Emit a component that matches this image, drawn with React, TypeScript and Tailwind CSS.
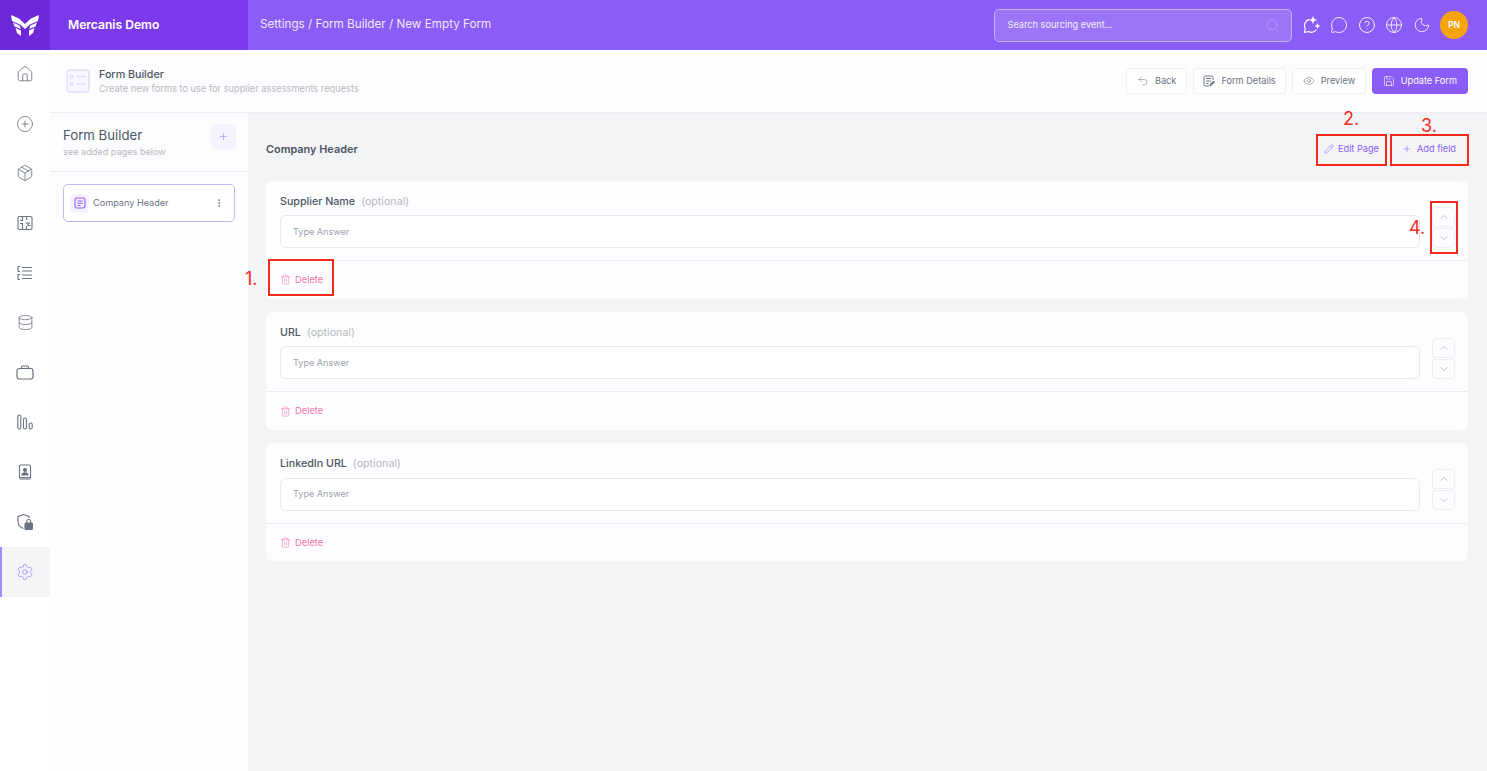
import {
  ChevronDown,
  ChevronUp,
  CircleHelp,
  CirclePlus,
  Database,
  Eye,
  Globe,
  House,
  MessageCircle,
  Moon,
  Package,
  Pencil,
  Plus,
  Save,
  Search,
  Settings,
  Trash2,
  Undo2,
  EllipsisVertical,
} from 'lucide-react'

const fields = ['Supplier Name', 'URL', 'LinkedIn URL']

function Logo() {
  return (
    <svg width="28" height="21" viewBox="0 0 28 21" fill="#fff">
      <path d="M0 0L8 3.500L14 9L20 3.500L28 0L27 6L19 9.500L14 14L9 9.500L1 6Z" />
      <path d="M2 7.500L8.500 10.500L10 14L3.500 11.500Z" />
      <path d="M26 7.500L19.500 10.500L18 14L24.500 11.500Z" />
      <path d="M4.500 13L10 15.500V21L6 18Z" />
      <path d="M23.500 13L18 15.500V21L22 18Z" />
    </svg>
  )
}

function MazeIcon() {
  return (
    <svg width="16" height="16" viewBox="0 0 16 16" fill="none" stroke="#6b7280" strokeWidth="1.100">
      <rect x="1" y="1.500" width="14" height="13" rx="1.500" />
      <path d="M5.500 1.500V5.500H3M3 8.500H5.500V14.500M9.500 1.500V5M8.500 8H13M11 8V10.500H13.500M9.500 11V14.500" />
    </svg>
  )
}

function ListIcon() {
  return (
    <svg width="16" height="16" viewBox="0 0 16 16" fill="none" stroke="#6b7280" strokeWidth="1.100">
      <path d="M3 1.500H1V6.500H3M3 9.500H1V14.500H3M5 2.500H15M5 6H15M5 10H15M5 13.500H15" />
    </svg>
  )
}

function BarsIcon() {
  return (
    <svg width="16" height="16" viewBox="0 0 16 16" fill="none" stroke="#6b7280" strokeWidth="1.100">
      <rect x="0.800" y="1" width="3" height="14" rx="1.500" />
      <rect x="6.500" y="4" width="3" height="11" rx="1.500" />
      <rect x="12.200" y="9" width="3" height="6" rx="1.500" />
    </svg>
  )
}

function BriefcaseIcon() {
  return (
    <svg width="18" height="18" viewBox="0 0 18 18" fill="none" stroke="#6b7280" strokeWidth="1.200">
      <rect x="1" y="4.500" width="16" height="10.500" rx="2.500" />
      <path d="M5.500 4.500V3.500A1.500 1.500 0 0 1 7 2H11A1.500 1.500 0 0 1 12.500 3.500V4.500" />
    </svg>
  )
}

function ContactIcon() {
  return (
    <svg width="16" height="16" viewBox="0 0 16 16" fill="none" stroke="#6b7280" strokeWidth="1.100">
      <path d="M2.500 13.500V2A1 1 0 0 1 3.500 1H12.500A1 1 0 0 1 13.500 2V13.500Z" />
      <path d="M2.500 15H13.500" />
      <circle cx="8" cy="6" r="1.500" fill="#6b7280" />
      <path d="M5 11A3 2.200 0 0 1 11 11Z" fill="#6b7280" />
    </svg>
  )
}

function ShieldLockIcon() {
  return (
    <svg width="18" height="18" viewBox="0 0 18 18" fill="none" stroke="#6b7280" strokeWidth="1.100">
      <path d="M7.500 15.500C4 14.500 2 11.500 2 8V3.500L7.500 1.500L13 3.500V5" />
      <rect x="9" y="10" width="7.500" height="6.500" rx="1" fill="#6b7280" />
      <path d="M10.700 10V8.500A2 2 0 0 1 14.700 8.500V10" />
    </svg>
  )
}

function SparkChatIcon() {
  return (
    <svg width="18" height="18" viewBox="0 0 18 18" fill="none" stroke="#fff" strokeWidth="1.200">
      <path d="M6.500 3.300A6.500 6.500 0 0 0 2.200 12.500L1.500 16.500L5.500 15.500A6.500 6.500 0 0 0 13.500 13.500" strokeLinejoin="round" />
      <path d="M10 0.500L11 3L13.500 4L11 5L10 7.500L9 5L6.500 4L9 3Z" fill="#fff" strokeWidth="0.400" />
      <path d="M14.500 7.500L15.200 9.300L17 10L15.200 10.700L14.500 12.500L13.800 10.700L12 10L13.800 9.300Z" fill="#fff" strokeWidth="0.400" />
    </svg>
  )
}

function FormListIcon() {
  return (
    <svg width="24" height="24" viewBox="0 0 24 24" fill="#f8f6ff" stroke="#e3dcfe" strokeWidth="1.400">
      <rect x="1" y="1" width="22" height="22" rx="3" />
      <path d="M10 7.500H20M10 15H20" />
      <circle cx="5.500" cy="8" r="1.500" />
      <circle cx="5.500" cy="15" r="1.500" />
    </svg>
  )
}

function PageIcon() {
  return (
    <svg width="12" height="12" viewBox="0 0 12 12" fill="none" stroke="#8b5cf6" strokeWidth="1.100">
      <path d="M2.500 1H9.500A1.500 1.500 0 0 1 11 2.500V8.500A2.500 2.500 0 0 1 8.500 11H2.500A1.500 1.500 0 0 1 1 9.500V2.500A1.500 1.500 0 0 1 2.500 1Z" />
      <path d="M3.500 4H8.500M3.500 6.200H8.500M3.500 8.500H6.500" />
    </svg>
  )
}

function DetailsIcon() {
  return (
    <svg width="12" height="12" viewBox="0 0 12 12" fill="none" stroke="#6b7280" strokeWidth="1">
      <path d="M6 11H2.500A1.500 1.500 0 0 1 1 9.500V2.500A1.500 1.500 0 0 1 2.500 1H8.500A1.500 1.500 0 0 1 10 2.500V5" />
      <path d="M3 3.500H8M3 6H8M3 8.500H5.500" />
      <path d="M7 11L7.500 9L10.500 6L11.500 7L8.500 10Z" fill="#6b7280" />
    </svg>
  )
}

function NavItem({ children, active }: { children: React.ReactNode; active?: boolean }) {
  return (
    <div
      className={
        active
          ? 'flex h-[49.800px] items-center justify-center border-l-2 border-[#a78bfa] bg-[#f3f4f6] pr-0.5'
          : 'flex h-[49.800px] items-center justify-center'
      }
    >
      {children}
    </div>
  )
}

function HeaderButton({ icon, label }: { icon: React.ReactNode; label: string }) {
  return (
    <button
      type="button"
      className="flex h-[26px] items-center gap-[6px] rounded-[4px] border border-[#f0f0f3] bg-white px-[9.500px] text-[9.200px] text-[#6b7280]"
    >
      {icon}
      {label}
    </button>
  )
}

function FieldCard({ name }: { name: string }) {
  return (
    <div className="rounded-md bg-[#fdfdff]">
      <div className="flex gap-3 pt-[13px] pr-[13px] pb-3 pl-[14px]">
        <div className="min-w-0 flex-1">
          <div className="flex h-[16px] items-center gap-[6px] text-[10.700px]">
            <span className="font-medium text-[#4b5563]">{name}</span>
            <span className="text-[#b5b8c0]">(optional)</span>
          </div>
          <div className="mt-[5.500px] flex h-[33px] items-center rounded-md border border-[#e9eaee] bg-white px-3 text-[9.100px] text-[#9ca3af]">
            Type Answer
          </div>
        </div>
        <div className="mt-[13px] flex flex-col gap-px">
          <div className="flex h-5 w-[23px] items-center justify-center rounded-t-[5px] rounded-b-[2px] border border-[#eeeff2]">
            <ChevronUp size={12} color="#9ca3af" strokeWidth={1.3} />
          </div>
          <div className="flex h-5 w-[23px] items-center justify-center rounded-t-[2px] rounded-b-[5px] border border-[#eeeff2]">
            <ChevronDown size={12} color="#9ca3af" strokeWidth={1.3} />
          </div>
        </div>
      </div>
      <div className="flex h-[38.800px] items-center gap-[4px] border-t border-[#ebecef] px-[14px] text-[9.300px] text-[#f472a6]">
        <Trash2 size={11} strokeWidth={1.2} />
        Delete
      </div>
    </div>
  )
}

function Callout({ className, num, numClass }: { className: string; num: string; numClass: string }) {
  return (
    <>
      <div className={`pointer-events-none absolute border-2 border-[#f5291c] ${className}`} />
      <span className={`pointer-events-none absolute text-[18px] leading-none text-[#f5291c] ${numClass}`}>{num}</span>
    </>
  )
}

export default function App() {
  return (
    <div className="relative flex h-[771px] w-full flex-col overflow-hidden bg-white font-['Inter',sans-serif]">
      <header className="flex h-[50px] shrink-0 items-center bg-[#8b5cf6] text-white">
        <div className="flex h-full w-[50px] items-center justify-center bg-[#6d28d9]">
          <Logo />
        </div>
        <div className="flex h-full w-[198px] items-center bg-[#7c3aed] pl-[18px] text-[12.100px] font-semibold">
          Mercanis Demo
        </div>
        <div className="ml-3 flex-1 text-[11.700px] text-[#efe9ff]">Settings / Form Builder / New Empty Form</div>
        <div className="flex h-[33px] w-[298px] items-center justify-between rounded-[5px] border border-[#c4b0fb] bg-[#9b74f7] pr-[11px] pl-[13px] text-[9.200px] text-[#f3efff]">
          Search sourcing event...
          <Search size={15} color="#b8a2f3" strokeWidth={1.3} />
        </div>
        <div className="ml-[11px] flex items-center gap-[9.500px] pr-[19px]">
          <SparkChatIcon />
          <MessageCircle size={18} strokeWidth={1.2} />
          <CircleHelp size={18} strokeWidth={1.2} />
          <Globe size={18} strokeWidth={1.1} />
          <Moon size={18} strokeWidth={1.1} />
          <div className="flex h-7 w-7 items-center justify-center rounded-full bg-[#f5a30f] text-[8.500px] font-semibold">
            PN
          </div>
        </div>
      </header>

      <div className="flex min-h-0 flex-1">
        <aside className="w-[50px] shrink-0 bg-white">
          <div className="-mt-px flex flex-col">
            <NavItem><House size={18} color="#6b7280" strokeWidth={1.1} /></NavItem>
            <NavItem><CirclePlus size={18} color="#6b7280" strokeWidth={1.1} /></NavItem>
            <NavItem><Package size={18} color="#6b7280" strokeWidth={1.1} /></NavItem>
            <NavItem><MazeIcon /></NavItem>
            <NavItem><ListIcon /></NavItem>
            <NavItem><Database size={17} color="#6b7280" strokeWidth={1.1} /></NavItem>
            <NavItem><BriefcaseIcon /></NavItem>
            <NavItem><BarsIcon /></NavItem>
            <NavItem><ContactIcon /></NavItem>
            <NavItem><ShieldLockIcon /></NavItem>
            <NavItem active><Settings size={18} color="#a78bfa" strokeWidth={1.2} /></NavItem>
          </div>
        </aside>

        <div className="flex min-w-0 flex-1 flex-col">
          <div className="flex h-[63px] shrink-0 items-center justify-between border-b border-[#eceef1] bg-[#fdfdff] pr-[19px] pl-4">
            <div className="flex items-center gap-[9px]">
              <FormListIcon />
              <div>
                <div className="text-[10.700px] leading-[14px] font-medium text-[#4b5563]">Form Builder</div>
                <div className="text-[9.250px] leading-[13px] text-[#b5b8c0]">Create new forms to use for supplier assessments requests</div>
              </div>
            </div>
            <div className="flex items-center gap-[6px]">
              <HeaderButton icon={<Undo2 size={12} strokeWidth={1.1} />} label="Back" />
              <HeaderButton icon={<DetailsIcon />} label="Form Details" />
              <HeaderButton icon={<Eye size={12} strokeWidth={1.1} />} label="Preview" />
              <button
                type="button"
                className="flex h-[26px] items-center gap-[6px] rounded-[4px] bg-[#8b5cf6] px-[11px] text-[9.200px] text-white"
              >
                <Save size={12} strokeWidth={1.2} />
                Update Form
              </button>
            </div>
          </div>

          <div className="flex min-h-0 flex-1">
            <div className="w-[198px] shrink-0 bg-[#fdfdff]">
              <div className="flex h-[59px] items-start justify-between border-b border-[#ebecef] pt-[11px] pr-3 pl-[13px]">
                <div className="pt-[2px]">
                  <div className="text-[13.200px] leading-[18px] text-[#4b5563]">Form Builder</div>
                  <div className="mt-px text-[9.150px] leading-[14px] text-[#b5b8c0]">see added pages below</div>
                </div>
                <div className="flex h-[25px] w-[25px] items-center justify-center rounded-[4px] bg-[#f5f3ff]">
                  <Plus size={11} color="#a78bfa" strokeWidth={1.4} />
                </div>
              </div>
              <div className="px-[13px] pt-3">
                <div className="flex h-[38px] items-center rounded-[5px] border border-[#c4b5fd] bg-white pr-2.5 pl-[6px]">
                  <div className="flex h-[19px] w-[19px] items-center justify-center rounded-[4px] bg-[#f5f3ff]">
                    <PageIcon />
                  </div>
                  <span className="ml-[4px] flex-1 text-[9.150px] text-[#6b7280]">Company Header</span>
                  <EllipsisVertical size={10} color="#6b7280" />
                </div>
              </div>
            </div>

            <main className="min-w-0 flex-1 bg-[#f3f4f6] pr-[19px] pl-[18px]">
              <div className="flex h-[67.600px] items-center justify-between pt-[4px]">
                <div className="text-[10.900px] font-semibold text-[#4b5563]">Company Header</div>
                <div className="flex items-center">
                  <div className="flex items-center gap-[4px] text-[9.200px] text-[#8b5cf6]">
                    <Pencil size={10} strokeWidth={1.2} />
                    Edit Page
                  </div>
                  <div className="mr-[12px] ml-[23px] flex items-center gap-[5px] text-[9.200px] text-[#8b5cf6]">
                    <Plus size={10} strokeWidth={1.2} />
                    Add field
                  </div>
                </div>
              </div>
              <div className="flex flex-col gap-[13px]">
                {fields.map((name) => (
                  <FieldCard key={name} name={name} />
                ))}
              </div>
            </main>
          </div>
        </div>
      </div>

      <Callout className="top-[259px] left-[268px] h-[37px] w-[66px]" num="1." numClass="top-[270px] left-[245px]" />
      <Callout className="top-[134px] left-[1316px] h-[32px] w-[71px]" num="2." numClass="top-[110px] left-[1343px]" />
      <Callout className="top-[134px] left-[1390px] h-[32px] w-[79px]" num="3." numClass="top-[117px] left-[1421px]" />
      <Callout className="top-[201px] left-[1430px] h-[53px] w-[28px]" num="4." numClass="top-[219px] left-[1409px]" />
    </div>
  )
}
